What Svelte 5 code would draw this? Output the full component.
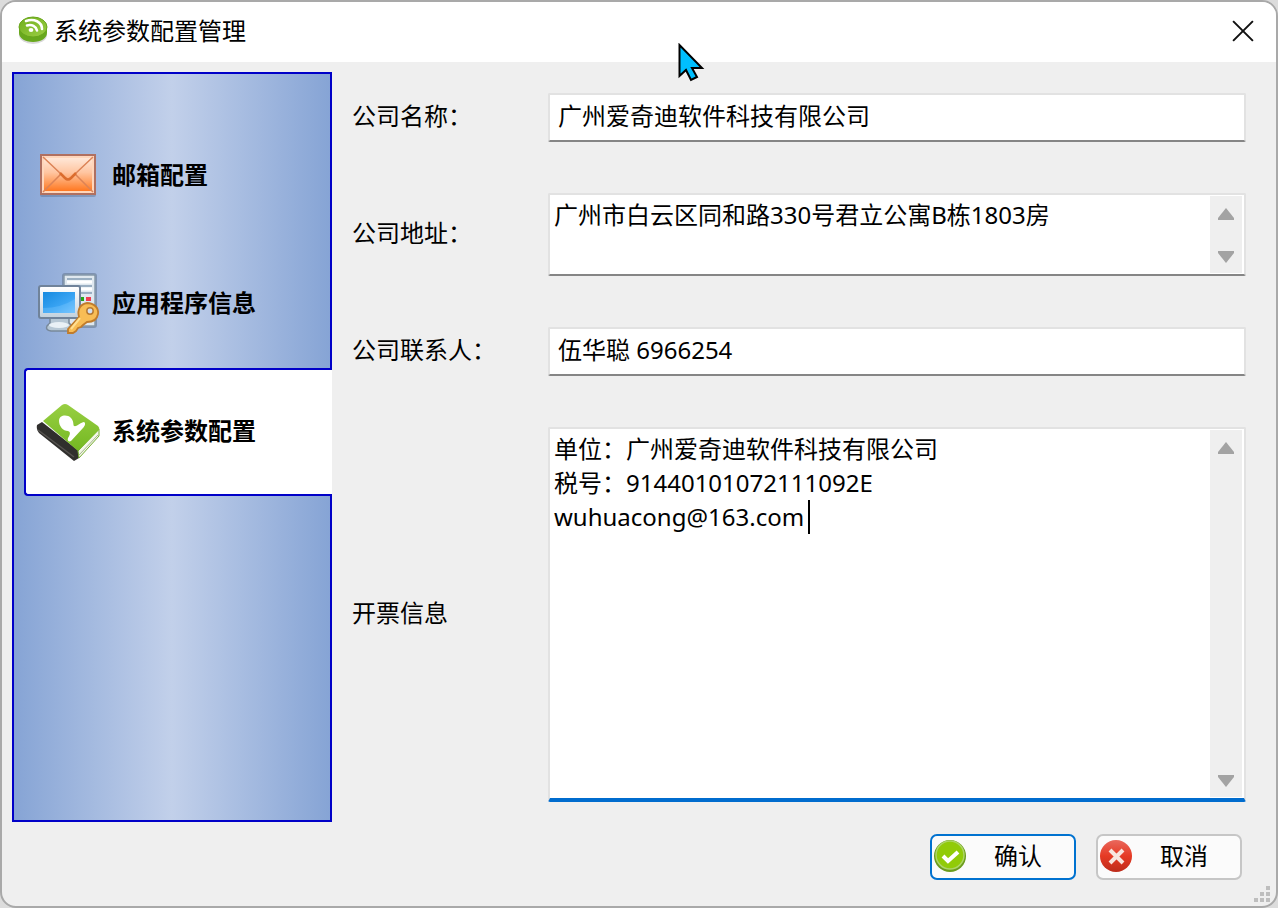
<script lang="ts">
  type Field = { id: string; label: string; value: string; rows?: number; focused?: boolean };

  const tabs = [
    { id: 'mail', label: '邮箱配置' },
    { id: 'app', label: '应用程序信息' },
    { id: 'system', label: '系统参数配置' },
  ];

  let activeTab = $state('system');

  let fields = $state<Field[]>([
    { id: 'name', label: '公司名称：', value: '广州爱奇迪软件科技有限公司' },
    { id: 'address', label: '公司地址：', value: '广州市白云区同和路330号君立公寓B栋1803房', rows: 2 },
    { id: 'contact', label: '公司联系人：', value: '伍华聪 6966254' },
    {
      id: 'invoice',
      label: '开票信息',
      value: '单位：广州爱奇迪软件科技有限公司\n税号：91440101072111092E\nwuhuacong@163.com',
      rows: 3,
      focused: true,
    },
  ]);
</script>

<div class="window" lang="zh-CN">
  <header class="titlebar">
    <svg class="logo" viewBox="0 0 32 32" aria-hidden="true">
      <defs>
        <linearGradient id="logo-top" x1="0" y1="0" x2="1" y2="1">
          <stop offset="0" stop-color="#6fae1c" />
          <stop offset="1" stop-color="#9ccf45" />
        </linearGradient>
      </defs>
      <ellipse cx="16" cy="20" rx="14" ry="9" fill="#000" opacity=".15" />
      <path d="M2 12v6c0 5 6 9 14 9s14-4 14-9v-6z" fill="#68a81d" />
      <ellipse cx="16" cy="12" rx="14" ry="10" fill="url(#logo-top)" stroke="#69a61b" />
      <g fill="none" stroke="#fff" stroke-width="2.600" stroke-linecap="round">
        <path d="M9 6c8-3 16 1 16 8" />
        <path d="M10 10.500c5-1.500 9 1 10 5" />
      </g>
      <ellipse cx="14" cy="15" rx="2.400" ry="2" fill="#fff" />
    </svg>
    <h1>系统参数配置管理</h1>
    <button class="close" aria-label="关闭">
      <svg viewBox="0 0 20 20"><path d="M1 1l18 18M19 1L1 19" stroke="#111" stroke-width="1.800" /></svg>
    </button>
  </header>

  <div class="body">
    <nav class="sidebar">
      {#each tabs as tab (tab.id)}
        <button class="tab" class:active={activeTab === tab.id} onclick={() => (activeTab = tab.id)}>
          {#if tab.id === 'mail'}
            <svg viewBox="0 0 64 64" aria-hidden="true">
              <defs>
                <linearGradient id="mail-fill" x1="0" y1="0" x2="0" y2="1">
                  <stop offset="0" stop-color="#ffeee3" />
                  <stop offset=".45" stop-color="#ffc5a0" />
                  <stop offset=".75" stop-color="#ff954f" />
                  <stop offset="1" stop-color="#ff6a0c" />
                </linearGradient>
              </defs>
              <rect x="4" y="12" width="56" height="41" rx="2" fill="#3c506e" opacity=".3" />
              <rect x="5" y="11" width="54" height="39" fill="url(#mail-fill)" stroke="#b07060" stroke-width="2" />
              <rect x="7" y="13" width="50" height="35" fill="none" stroke="#ffd6bb" stroke-width="2" />
              <path d="M7 13l18 17M57 13L39 30M7 48l18-18M57 48L39 30" fill="none" stroke="#dc8356" stroke-width="1.500" />
              <path d="M24 29l5 5q3 3 6 0l5-5" fill="none" stroke="#db6c2d" stroke-width="2.500" />
            </svg>
          {:else if tab.id === 'app'}
            <svg viewBox="0 0 64 64" aria-hidden="true">
              <defs>
                <linearGradient id="screen" x1="0" y1="0" x2="1" y2="1">
                  <stop offset="0" stop-color="#168ae0" />
                  <stop offset=".6" stop-color="#3ba5f4" />
                  <stop offset="1" stop-color="#76c4ff" />
                </linearGradient>
                <linearGradient id="frame" x1="0" y1="0" x2="0" y2="1">
                  <stop offset="0" stop-color="#fff" />
                  <stop offset="1" stop-color="#c3d2de" />
                </linearGradient>
              </defs>
              <rect x="26" y="1" width="35" height="55" rx="3" fill="#60738d" opacity=".55" />
              <rect x="28" y="3" width="31" height="51" rx="1" fill="#dfe8ef" stroke="#8799aa" stroke-width="1.500" />
              <path d="M31 7h25M31 14h25M31 21h25" stroke="#9aafc2" stroke-width="2" />
              <path d="M31 10h25M31 17h25" stroke="#fff" stroke-width="3" />
              <rect x="43" y="25" width="5" height="4" fill="#24a515" />
              <rect x="50" y="25" width="5" height="4" fill="#ef3d50" />
              <path d="M14 46h19v5l3 3q2 4-4 5H15q-6-1-4-5l3-3z" fill="#b7c8d5" stroke="#78899b" stroke-width="1.500" />
              <ellipse cx="23" cy="53" rx="10" ry="3" fill="#e9f1f6" />
              <rect x="2" y="13" width="43" height="34" rx="3" fill="#70839a" />
              <rect x="4" y="15" width="39" height="30" rx="1" fill="url(#frame)" />
              <rect x="7" y="20" width="32" height="21" fill="url(#screen)" />
              <path d="M7 36q18 0 32-9v14H7z" fill="#7bc9ff" opacity=".35" />
              <path
                d="M43 45c-2-7 1-13 8-14 7 0 12 5 11 11-1 6-6 8-11 8l-4 3-2 2-3 1-2 3-3 2h-5v-4z"
                fill="#f8bd55"
                stroke="#c07c2c"
                stroke-width="1.800"
              />
              <path d="M44 46L35 57" stroke="#ffdf91" stroke-width="2" />
              <circle cx="54" cy="39" r="3.200" fill="#d3dfef" stroke="#b67a34" stroke-width="1.500" />
            </svg>
          {:else}
            <svg viewBox="0 0 64 64" aria-hidden="true">
              <defs>
                <linearGradient id="book" x1="0" y1="0" x2="0" y2="1">
                  <stop offset="0" stop-color="#98cf42" />
                  <stop offset="1" stop-color="#74b822" />
                </linearGradient>
              </defs>
              <path d="M1 25l5-3 37 29v7l-5 3L3 33q-3-4-2-8z" fill="#302f2d" />
              <path d="M2 30l36 27" stroke="#55524f" stroke-width="1.500" />
              <path d="M42 51l21-22v7L43 58z" fill="#f3f6e9" stroke="#76ad32" />
              <path d="M43 55l19-20" stroke="#a4b58a" />
              <path d="M7 21L26 5q3-2 6 0l30 21q2 2 1 4L42 51z" fill="url(#book)" />
              <path
                d="M23 21c0-6 8-7 12-3 3 3 2 7 3 8 3 1 7-4 10-4 2 1 1 4-1 6L35 41c-2 1-4 0-3-3 2-3 3-6 0-7-5 0-9-5-9-10z"
                fill="#fff"
              />
            </svg>
          {/if}
          <span>{tab.label}</span>
        </button>
      {/each}
    </nav>

    <main>
      <form id="settings" onsubmit={(e) => e.preventDefault()}>
        {#each fields as field (field.id)}
          <label for={field.id}>{field.label}</label>
          {#if field.rows}
            <div class="box memo" class:focused={field.focused}>
              <textarea id={field.id} rows={field.rows} bind:value={field.value} spellcheck="false"></textarea>
              <div class="scrollbar">
                <button type="button" aria-label="向上滚动">
                  <svg viewBox="0 0 16 12"><path d="M8 0L16 10v2H0v-2z" fill="#a3a3a3" /></svg>
                </button>
                <button type="button" aria-label="向下滚动">
                  <svg viewBox="0 0 16 12"><path d="M8 12L16 2V0H0v2z" fill="#a3a3a3" /></svg>
                </button>
              </div>
              {#if field.focused}<i class="caret"></i>{/if}
            </div>
          {:else}
            <input class="box" id={field.id} type="text" bind:value={field.value} spellcheck="false" />
          {/if}
        {/each}
      </form>

      <footer>
        <button class="action primary" type="submit" form="settings">
          <svg viewBox="0 0 32 32" aria-hidden="true">
            <circle cx="16" cy="16" r="16" fill="#6b9c1c" />
            <circle cx="16" cy="15" r="14" fill="#91cb08" stroke="#add566" stroke-width="1.500" />
            <path d="M9 16l5 5 10-9" fill="none" stroke="#fff" stroke-width="4" />
          </svg>
          <span>确认</span>
        </button>
        <button class="action" type="button">
          <svg viewBox="0 0 32 32" aria-hidden="true">
            <defs>
              <linearGradient id="cancel" x1="0" y1="0" x2="0" y2="1">
                <stop offset="0" stop-color="#e9685d" />
                <stop offset=".5" stop-color="#e63a24" />
                <stop offset="1" stop-color="#bd2c1b" />
              </linearGradient>
            </defs>
            <circle cx="16" cy="16" r="16" fill="url(#cancel)" />
            <path d="M10 10l13 13M23 10L10 23" stroke="#f7e5df" stroke-width="4" />
          </svg>
          <span>取消</span>
        </button>
      </footer>
    </main>
  </div>

  <svg class="grip" viewBox="0 0 16 16" aria-hidden="true">
    <path d="M12 0h4v4h-4zM6 6h4v4H6zM12 6h4v4h-4zM0 12h4v4H0zM6 12h4v4H6zM12 12h4v4h-4z" fill="#bebebe" />
  </svg>
  <svg class="pointer" viewBox="0 0 28 40" aria-hidden="true">
    <path d="M1.500 2v31l6.500-6 5 10 6-3-5-9h10z" fill="#00bfff" stroke="#000" stroke-width="2" />
  </svg>
</div>

<style>
  :global(body) {
    background: #dcdcdc;
  }

  .window {
    position: relative;
    display: flex;
    flex-direction: column;
    box-sizing: border-box;
    min-height: 100vh;
    border: 2px solid #a9a9a9;
    border-radius: 16px;
    background: #efefef;
    color: #000;
    font-family: 'Noto Sans', 'Noto Sans CJK SC', sans-serif;
    font-size: 24px;
    line-height: 34px;
    overflow: hidden;
  }

  button,
  input,
  textarea {
    margin: 0;
    font: inherit;
    color: inherit;
  }

  svg {
    display: block;
    flex: none;
  }

  .titlebar {
    display: flex;
    align-items: center;
    box-sizing: border-box;
    height: 60px;
    padding: 0 22px 2px 15px;
    background: #fff;
  }

  .logo {
    width: 32px;
    height: 32px;
  }

  h1 {
    flex: 1;
    margin: 0 0 0 5px;
    font-size: inherit;
    font-weight: 400;
  }

  .close {
    padding: 0;
    border: none;
    background: none;
  }

  .close svg {
    width: 22px;
    height: 22px;
  }

  .body {
    display: flex;
    flex: 1;
    gap: 20px;
    padding: 10px 30px 26px 10px;
  }

  .sidebar {
    box-sizing: border-box;
    width: 320px;
    margin-bottom: 58px;
    padding-top: 38px;
    border: 2px solid #0000c8;
    background: linear-gradient(90deg, #86a4d5, #c2d0ea 50%, #86a4d5);
  }

  .tab {
    display: flex;
    align-items: center;
    gap: 12px;
    box-sizing: border-box;
    width: 306px;
    height: 128px;
    margin-left: 10px;
    padding: 0 0 0 10px;
    border: 2px solid transparent;
    border-right: none;
    border-radius: 4px 0 0 4px;
    background: none;
    font-weight: 700;
  }

  .tab.active {
    width: 308px;
    border-color: #0000c8;
    background: #fff;
  }

  .tab svg {
    width: 64px;
    height: 64px;
  }

  .tab span {
    padding-bottom: 2px;
  }

  main {
    display: flex;
    flex: 1;
    flex-direction: column;
    min-width: 0;
  }

  form {
    display: grid;
    flex: 1;
    grid-template-columns: 196px 1fr;
    grid-template-rows: 49px 83px 49px 1fr;
    gap: 51px 0;
    align-items: center;
    padding-top: 21px;
  }

  label {
    padding-bottom: 4px;
  }

  .box {
    box-sizing: border-box;
    width: 100%;
    height: 100%;
    border: 2px solid #e2e2e2;
    border-bottom-color: #858585;
    border-radius: 2px;
    background: #fff;
    outline: none;
  }

  input.box {
    padding: 0 8px 6px;
  }

  .memo {
    position: relative;
    display: flex;
  }

  .memo.focused {
    border-bottom: 4px solid #006cce;
  }

  textarea {
    flex: 1;
    min-width: 0;
    padding: 3px 4px;
    border: none;
    background: none;
    outline: none;
    resize: none;
    overflow: hidden;
  }

  .scrollbar {
    display: flex;
    flex-direction: column;
    justify-content: space-between;
    width: 32px;
    margin: 1px 2px 1px 0;
    background: #efefef;
  }

  .scrollbar button {
    padding: 12px 8px 10px;
    border: none;
    background: none;
  }

  .scrollbar svg {
    width: 16px;
    height: 12px;
  }

  .caret {
    position: absolute;
    top: 71px;
    left: 258px;
    width: 2px;
    height: 34px;
    background: #000;
  }

  footer {
    display: flex;
    justify-content: flex-end;
    gap: 20px;
    padding: 32px 4px 0 0;
  }

  .action {
    display: flex;
    align-items: center;
    box-sizing: border-box;
    width: 146px;
    height: 46px;
    padding: 0 4px 2px 2px;
    border: 2px solid #c6c6c6;
    border-radius: 7px;
    background: #fbfbfb;
  }

  .action.primary {
    border-color: #0072d0;
  }

  .action svg {
    width: 32px;
    height: 32px;
  }

  .action span {
    flex: 1;
  }

  .grip {
    position: absolute;
    right: 6px;
    bottom: 4px;
    width: 16px;
    height: 16px;
  }

  .pointer {
    position: absolute;
    top: 41px;
    left: 676px;
    width: 28px;
    height: 40px;
  }
</style>
